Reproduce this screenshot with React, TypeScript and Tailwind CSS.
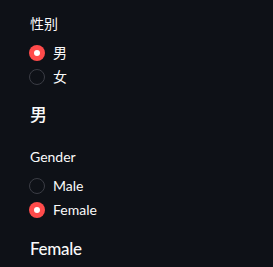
const font = { fontFamily: 'Lato, "Noto Sans CJK SC", sans-serif' };

function Radio({ label, checked }: { label: string; checked: boolean }) {
  return (
    <div className="flex items-center h-6 ml-[-1px]">
      {checked ? (
        <span className="w-4 h-4 rounded-full bg-[#ff4b4b] flex items-center justify-center">
          <span className="w-[6px] h-[6px] rounded-full bg-white" />
        </span>
      ) : (
        <span className="w-4 h-4 rounded-full border border-[#3b3d45] bg-[#0e1117]" />
      )}
      <span className="ml-2 text-[14px] leading-5 mt-[-1px] text-[#fafafa]">{label}</span>
    </div>
  );
}

export default function App() {
  return (
    <div className="w-[273px] h-[267px] bg-[#0e1117] text-[#fafafa] pl-[30px] pt-[14px] flex flex-col" style={font}>
      <div className="h-5 leading-5 text-[14px]">性别</div>
      <div className="mt-[7px] flex flex-col">
        <Radio label="男" checked />
        <Radio label="女" checked={false} />
      </div>
      <div className="mt-[14px] h-6 leading-6 text-[17px] font-medium">男</div>
      <div className="mt-[20px] h-5 leading-5 text-[14px]">Gender</div>
      <div className="mt-[7px] flex flex-col">
        <Radio label="Male" checked={false} />
        <Radio label="Female" checked />
      </div>
      <div className="mt-[15px] h-6 leading-6 text-[17px] font-medium tracking-[-0.3px]">Female</div>
    </div>
  );
}
